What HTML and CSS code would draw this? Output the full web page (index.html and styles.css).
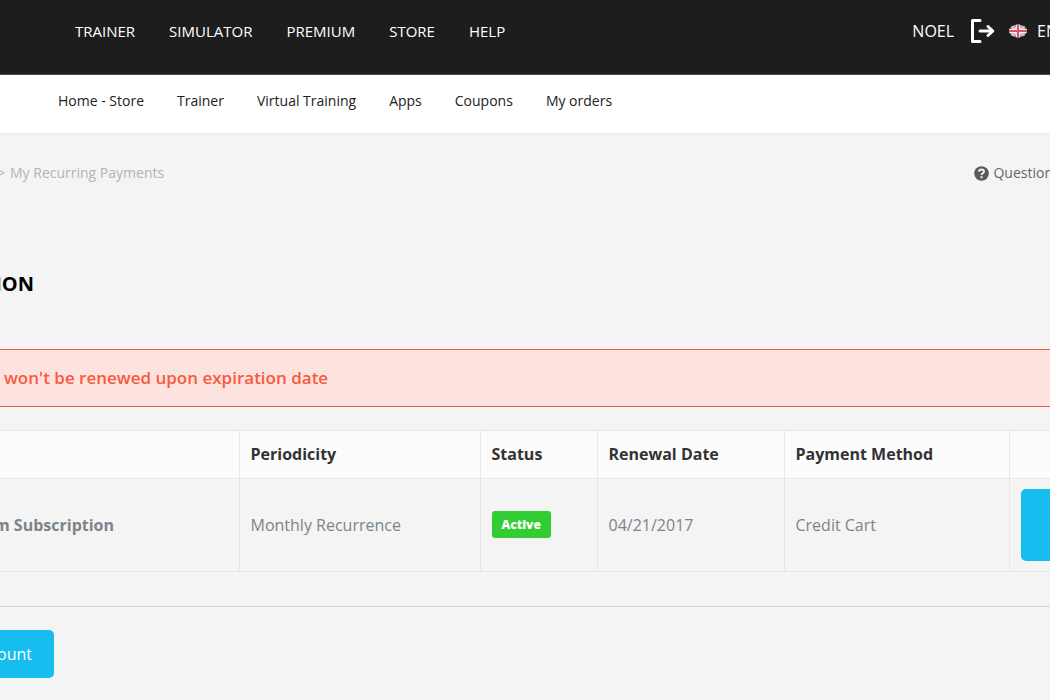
FILE: index.html
```html
<!DOCTYPE html>
<html lang="en">
<head>
<meta charset="utf-8">
<title>My Recurring Payments</title>
<link rel="stylesheet" href="styles.css">
</head>
<body>
<header class="topbar">
  <nav class="main-nav" aria-label="Main">
    <a href="#">TRAINER</a>
    <a href="#">SIMULATOR</a>
    <a href="#">PREMIUM</a>
    <a href="#">STORE</a>
    <a href="#">HELP</a>
  </nav>
  <div class="account">
    <a href="#" class="user">NOEL</a>
    <a href="#" class="logout" aria-label="Log out">
      <svg width="26" height="26" viewBox="0 0 26 26" fill="none" stroke="#fff">
        <path d="M10 2.500H2.500V23.500H10" stroke-width="3" stroke-linecap="round" stroke-linejoin="round"/>
        <path d="M10 13H22" stroke-width="3" stroke-linecap="round"/>
        <path d="M18 8.500L22.800 13L18 17.500" stroke-width="3" stroke-linecap="round" stroke-linejoin="round"/>
      </svg>
    </a>
    <a href="#" class="language">
      <svg width="18" height="14" viewBox="0 0 18 14">
        <defs><clipPath id="flag"><ellipse cx="9" cy="7" rx="9" ry="6.500"/></clipPath></defs>
        <g clip-path="url(#flag)">
          <path fill="#7479b0" d="M0 0H18V14H0Z"/>
          <path stroke="#eee6ee" stroke-width="2.600" d="M0 0L18 14M18 0L0 14"/>
          <path stroke="#dc7f8b" stroke-width="1" d="M0 0L18 14M18 0L0 14"/>
          <path stroke="#f5eff2" stroke-width="4.600" d="M9 0V14M0 7H18"/>
          <path stroke="#e0525c" stroke-width="2.200" d="M9 0V14M0 7H18"/>
        </g>
      </svg>
      <span>EN</span>
    </a>
  </div>
</header>
<nav class="store-nav" aria-label="Store">
  <a href="#">Home - Store</a>
  <a href="#">Trainer</a>
  <a href="#">Virtual Training</a>
  <a href="#">Apps</a>
  <a href="#">Coupons</a>
  <a href="#">My orders</a>
</nav>
<main>
  <div class="crumbs">
    <div class="trail"><span>&gt;</span><span>My Recurring Payments</span></div>
    <a href="#" class="questions">
      <svg width="15" height="15" viewBox="0 0 15 15">
        <circle cx="7.500" cy="7.500" r="7.300" fill="#5a5a5a"/>
        <path d="M5 5.600C5.300 2.700 10 2.700 10 5.500C10 7.300 7.500 7.200 7.500 9.100" fill="none" stroke="#f4f4f4" stroke-width="2"/>
        <path d="M6.500 10.200H8.500V12.200H6.500Z" fill="#f4f4f4"/>
      </svg>
      <span>Question</span>
    </a>
  </div>
  <h1 class="title">ION</h1>
  <p class="alert" role="alert">won't be renewed upon expiration date</p>
  <table class="payments">
    <colgroup><col class="c-name"><col class="c-period"><col class="c-status"><col class="c-date"><col class="c-method"><col></colgroup>
    <thead>
      <tr><th></th><th>Periodicity</th><th>Status</th><th>Renewal Date</th><th>Payment Method</th><th></th></tr>
    </thead>
    <tbody>
      <tr>
        <td class="name">m Subscription</td>
        <td>Monthly Recurrence</td>
        <td><span class="badge">Active</span></td>
        <td>04/21/2017</td>
        <td>Credit Cart</td>
        <td class="action"><button type="button" class="btn btn-row" aria-label="Manage"></button></td>
      </tr>
    </tbody>
  </table>
  <div class="footer-actions">
    <button type="button" class="btn btn-account">ount</button>
  </div>
</main>
</body>
</html>
```
FILE: styles.css
```css
* { box-sizing: border-box; }
body {
  margin: 0;
  min-height: 100vh;
  overflow-x: hidden;
  background: #f4f4f4;
  color: #7b848b;
  font-family: "Open Sans", "Noto Sans", sans-serif;
  font-size: 16px;
  line-height: 24px;
}
a { color: inherit; text-decoration: none; }
svg { display: block; flex: none; }

.topbar {
  display: flex;
  justify-content: space-between;
  align-items: center;
  padding: 18px 0 30px 75px;
  overflow: hidden;
  background: #1d1d1d;
  border-bottom: 1px solid #4a4a4a;
  color: #fff;
}
.main-nav { display: flex; gap: 34px; font-size: 15px; }
.account { display: flex; align-items: center; flex: none; margin-right: -8px; }
.user { margin-right: 16px; }
.logout { margin-right: 13px; }
.language { display: flex; align-items: center; gap: 10px; }

.store-nav {
  display: flex;
  gap: 33px;
  padding: 14px 58px 20px;
  background: #fff;
  border-bottom: 1px solid #e8e8e8;
  color: #222;
  font-size: 14px;
}

.crumbs {
  display: flex;
  justify-content: space-between;
  padding-top: 27px;
  overflow: hidden;
}
.trail {
  display: flex;
  gap: 5px;
  margin-left: -3px;
  color: #b3b3b3;
  font-size: 14px;
}
.questions {
  display: flex;
  align-items: center;
  gap: 4px;
  margin-right: -3px;
  color: #666;
  font-size: 14px;
}

.title {
  display: flex;
  justify-content: flex-end;
  width: 34px;
  margin: 84px 0 50px;
  overflow: hidden;
  color: #000;
  font-size: 20px;
  font-weight: 700;
  line-height: 30px;
}
.alert {
  margin: 0 0 23px;
  padding: 16px 4px;
  background: #fde3df;
  border: solid #f05f43;
  border-width: 1px 0;
  color: #f9593d;
  font-size: 17px;
  font-weight: 600;
}

.payments {
  width: 100%;
  table-layout: fixed;
  border-collapse: collapse;
}
.c-name { width: 239px; }
.c-period { width: 241px; }
.c-status { width: 117px; }
.c-date { width: 187px; }
.c-method { width: 225px; }
.payments th, .payments td {
  padding: 11px 11px 12px;
  border: 1px solid #e7e7e7;
  text-align: left;
  overflow: hidden;
}
.payments th:first-child, .payments td:first-child { border-left: 0; }
.payments th:last-child, .payments td:last-child { border-right: 0; }
.payments th { background: #fcfcfc; color: #333; font-weight: 700; }
.payments .name { padding-left: 0; font-weight: 700; text-indent: -6px; }
.badge {
  display: inline-block;
  padding: 4px 10px;
  border-radius: 3px;
  background: #32cd32;
  color: #fff;
  font-size: 12px;
  font-weight: 800;
  line-height: 19px;
  vertical-align: middle;
}
.payments .action { padding: 10px 0 10px 11px; }

.btn {
  display: block;
  border: 0;
  background: #18bdf0;
  color: #fff;
  font: inherit;
}
.btn-row { width: 100%; height: 72px; border-radius: 5px 0 0 5px; }
.footer-actions {
  margin-top: 34px;
  padding-top: 23px;
  border-top: 1px solid #d2d2d2;
}
.btn-account {
  display: flex;
  justify-content: flex-end;
  width: 54px;
  padding: 12px 22px 12px 0;
  border-radius: 0 5px 5px 0;
}
```
